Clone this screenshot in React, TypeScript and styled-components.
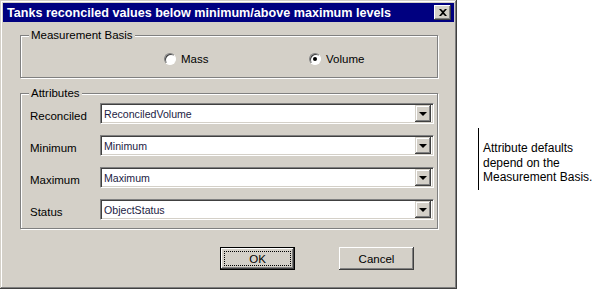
import React from 'react';
import styled, { createGlobalStyle } from 'styled-components';

const GlobalStyle = createGlobalStyle`
  html, body {
    margin: 0;
    padding: 0;
    background: #ffffff;
  }
  body {
    font-family: "Liberation Sans", Arial, sans-serif;
    font-size: 11.5px;
    color: #000;
  }
`;

const Page = styled.div`
  display: flex;
  align-items: flex-start;
  width: 594px;
  height: 290px;
`;

const Dialog = styled.div`
  box-sizing: border-box;
  width: 457px;
  height: 289px;
  padding: 3px;
  background: #d4d0c8;
  box-shadow: inset -1px -1px #404040, inset 1px 1px #d4d0c8,
    inset -2px -2px #808080, inset 2px 2px #ffffff;
  display: flex;
  flex-direction: column;
`;

const TitleBar = styled.div`
  height: 19px;
  background: #000080;
  display: flex;
  align-items: center;
  justify-content: space-between;
  padding: 0 3px 0 4px;
`;

const TitleText = styled.span`
  color: #fff;
  font-weight: bold;
  font-size: 12.6px;
  white-space: nowrap;
`;

const CloseButton = styled.div`
  box-sizing: border-box;
  width: 17px;
  height: 15px;
  background: #d4d0c8;
  box-shadow: inset -1px -1px #404040, inset 1px 1px #ffffff,
    inset -2px -2px #808080;
  display: flex;
  align-items: center;
  justify-content: center;
`;

const Body = styled.div`
  padding: 13px 16px 0 17px;
  display: flex;
  flex-direction: column;
`;

const Group = styled.div<{ $height: number }>`
  position: relative;
  box-sizing: border-box;
  height: ${(p) => p.$height}px;
  border: 1px solid #808080;
  box-shadow: inset 1px 1px #ffffff, 1px 1px #ffffff;
`;

const Legend = styled.span`
  position: absolute;
  left: 8px;
  top: -8px;
  padding: 0 2px;
  background: #d4d0c8;
  line-height: 14px;
`;

const RadioRow = styled.div`
  display: flex;
  padding: 17px 0 0 143px;
`;

const RadioItem = styled.label<{ $width: number }>`
  width: ${(p) => p.$width}px;
  display: flex;
  align-items: center;
  gap: 5px;
`;

const RadioCircle = styled.span<{ $checked?: boolean }>`
  position: relative;
  box-sizing: border-box;
  width: 12px;
  height: 12px;
  border-radius: 50%;
  background: #fff;
  border: 1px solid;
  border-color: #808080 #ffffff #ffffff #808080;
  box-shadow: inset 1px 1px #404040;

  &::after {
    content: '';
    display: ${(p) => (p.$checked ? 'block' : 'none')};
    position: absolute;
    left: 3px;
    top: 3px;
    width: 4px;
    height: 4px;
    border-radius: 50%;
    background: #000;
  }
`;

const Spacer = styled.div<{ $h: number }>`
  height: ${(p) => p.$h}px;
  flex-shrink: 0;
`;

const Rows = styled.div`
  display: flex;
  flex-direction: column;
  gap: 11px;
  padding: 9px 3px 0 9px;
`;

const Row = styled.div`
  display: grid;
  grid-template-columns: 70px 1fr;
  height: 21px;
`;

const FieldLabel = styled.span`
  padding-top: 7px;
`;

const Combo = styled.div`
  box-sizing: border-box;
  height: 21px;
  background: #fff;
  border: 1px solid;
  border-color: #808080 #ffffff #ffffff #808080;
  box-shadow: inset 1px 1px #404040, inset -1px -1px #d4d0c8;
  display: flex;
  align-items: center;
  padding: 2px 2px 2px 3px;
`;

const ComboText = styled.span`
  flex: 1;
  color: #1c1c44;
  font-size: 10.6px;
`;

const DropButton = styled.div`
  box-sizing: border-box;
  width: 16px;
  height: 17px;
  background: #d4d0c8;
  box-shadow: inset -1px -1px #404040, inset 1px 1px #d4d0c8,
    inset -2px -2px #808080, inset 2px 2px #ffffff;
  display: flex;
  align-items: center;
  justify-content: center;
`;

const Arrow = styled.span`
  width: 0;
  height: 0;
  border-left: 4px solid transparent;
  border-right: 4px solid transparent;
  border-top: 4px solid #000;
  margin-top: 1px;
`;

const Buttons = styled.div`
  display: flex;
  gap: 44px;
  padding: 18px 0 0 200px;
`;

const Button = styled.button<{ $default?: boolean }>`
  box-sizing: border-box;
  width: 75px;
  height: 23px;
  font-family: "Liberation Sans", Arial, sans-serif;
  font-size: 11.5px;
  color: #000;
  background: #d4d0c8;
  border: ${(p) => (p.$default ? '1px solid #000' : 'none')};
  box-shadow: inset -1px -1px #404040, inset 1px 1px #ffffff,
    inset -2px -2px #808080, inset 2px 2px #d4d0c8;
  padding: 0;
  position: relative;

  &::after {
    content: '';
    display: ${(p) => (p.$default ? 'block' : 'none')};
    position: absolute;
    inset: 3px;
    border: 1px dotted #000;
  }
`;

const Note = styled.div`
  display: flex;
  margin: 128px 0 0 21px;
  height: 62px;
`;

const NoteLine = styled.div`
  width: 1px;
  background: #000;
`;

const NoteText = styled.div`
  padding: 13px 0 0 4px;
  font-size: 12px;
  line-height: 14.5px;
`;

const fields = [
  { label: 'Reconciled', value: 'ReconciledVolume' },
  { label: 'Minimum', value: 'Minimum' },
  { label: 'Maximum', value: 'Maximum' },
  { label: 'Status', value: 'ObjectStatus' },
];

export default function App() {
  return (
    <>
      <GlobalStyle />
      <Page>
        <Dialog>
          <TitleBar>
            <TitleText>Tanks reconciled values below minimum/above maximum levels</TitleText>
            <CloseButton>
              <svg width="8" height="7" viewBox="0 0 8 7">
                <path d="M0 0h2l2 2 2-2h2L5 3.5 8 7H6L4 5 2 7H0l3-3.5z" fill="#000" />
              </svg>
            </CloseButton>
          </TitleBar>
          <Body>
            <Group $height={43}>
              <Legend>Measurement Basis</Legend>
              <RadioRow>
                <RadioItem $width={145}>
                  <RadioCircle />
                  Mass
                </RadioItem>
                <RadioItem $width={100}>
                  <RadioCircle $checked />
                  Volume
                </RadioItem>
              </RadioRow>
            </Group>
            <Spacer $h={15} />
            <Group $height={136}>
              <Legend>Attributes</Legend>
              <Rows>
                {fields.map((f) => (
                  <Row key={f.label}>
                    <FieldLabel>{f.label}</FieldLabel>
                    <Combo>
                      <ComboText>{f.value}</ComboText>
                      <DropButton>
                        <Arrow />
                      </DropButton>
                    </Combo>
                  </Row>
                ))}
              </Rows>
            </Group>
            <Buttons>
              <Button $default>OK</Button>
              <Button>Cancel</Button>
            </Buttons>
          </Body>
        </Dialog>
        <Note>
          <NoteLine />
          <NoteText>
            Attribute defaults
            <br />
            depend on the
            <br />
            Measurement Basis.
          </NoteText>
        </Note>
      </Page>
    </>
  );
}
